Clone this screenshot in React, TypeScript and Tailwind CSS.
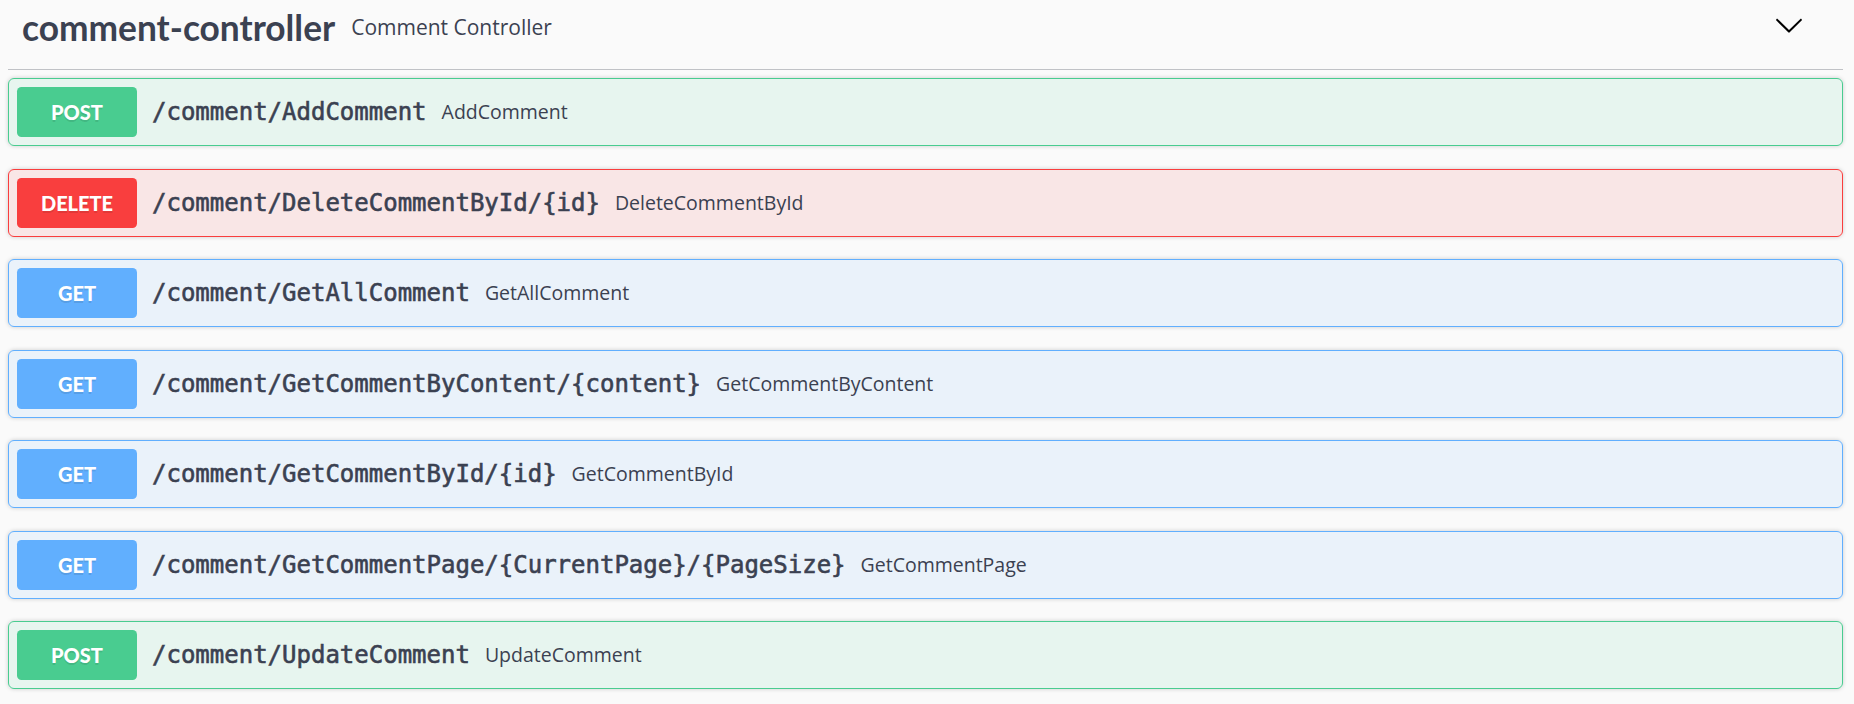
import React from 'react';

type Method = 'GET' | 'POST' | 'DELETE';

interface Operation {
  method: Method;
  path: string;
  summary: string;
}

const operations: Operation[] = [
  { method: 'POST', path: '/comment/AddComment', summary: 'AddComment' },
  { method: 'DELETE', path: '/comment/DeleteCommentById/{id}', summary: 'DeleteCommentById' },
  { method: 'GET', path: '/comment/GetAllComment', summary: 'GetAllComment' },
  { method: 'GET', path: '/comment/GetCommentByContent/{content}', summary: 'GetCommentByContent' },
  { method: 'GET', path: '/comment/GetCommentById/{id}', summary: 'GetCommentById' },
  { method: 'GET', path: '/comment/GetCommentPage/{CurrentPage}/{PageSize}', summary: 'GetCommentPage' },
  { method: 'POST', path: '/comment/UpdateComment', summary: 'UpdateComment' },
];

const styles: Record<Method, { block: string; badge: string }> = {
  POST: { block: 'border-[#49cc90] bg-[#49cc90]/10', badge: 'bg-[#49cc90]' },
  DELETE: { block: 'border-[#f93e3e] bg-[#f93e3e]/10', badge: 'bg-[#f93e3e]' },
  GET: { block: 'border-[#61affe] bg-[#61affe]/10', badge: 'bg-[#61affe]' },
};

function OpBlock({ op }: { op: Operation }) {
  const s = styles[op.method];
  return (
    <div
      className={`flex items-center p-[8px] border rounded-[6px] shadow-[0_0_4px_rgba(0,0,0,0.19)] ${s.block}`}
    >
      {/* method badge */}
      <div
        className={`w-[120px] h-[50px] shrink-0 rounded-[4.5px] flex items-center justify-center text-white font-black text-[20px] [text-shadow:0_1.5px_0_rgba(0,0,0,0.1)] ${s.badge}`}
        style={{ fontFamily: 'Lato, "Open Sans", sans-serif' }}
      >
        {op.method}
      </div>
      <span
        className="px-[15px] text-[24px] text-[#3b4151] whitespace-nowrap [-webkit-text-stroke:0.6px_#3b4151]"
        style={{ fontFamily: '"DejaVu Sans Mono", "Liberation Mono", monospace' }}
      >
        {op.path}
      </span>
      <span
        className="text-[19.5px] text-[#3b4151] whitespace-nowrap"
        style={{ fontFamily: '"Open Sans", sans-serif' }}
      >
        {op.summary}
      </span>
    </div>
  );
}

export default function App() {
  return (
    <div className="min-h-screen bg-[#fafafa] pl-[8px] pr-[11px]">
      {/* tag header */}
      <div className="h-[70px] pb-[14px] pl-[14px] pr-[39px] border-b border-[#3b4151]/30 flex items-center">
        <h4
          className="text-[35.3px] leading-[42px] font-bold text-[#3b4151]"
          style={{ fontFamily: 'Lato, "Open Sans", sans-serif' }}
        >
          comment-controller
        </h4>
        <small
          className="ml-[16px] text-[21px] text-[#3b4151]"
          style={{ fontFamily: '"Open Sans", sans-serif' }}
        >
          Comment Controller
        </small>
        <svg className="ml-auto self-start mt-[10px]" width="30" height="30" viewBox="0 0 20 20" fill="#000">
          <path d="M17.418 6.109c.272-.268.709-.268.979 0s.271.701 0 .969l-7.908 7.83c-.27.268-.707.268-.979 0l-7.908-7.83c-.27-.268-.27-.701 0-.969.271-.268.709-.268.979 0L10 13.25l7.418-7.141z" />
        </svg>
      </div>

      <div className="mt-[8px] flex flex-col gap-[22.5px]">
        {operations.map((op) => (
          <OpBlock key={op.path} op={op} />
        ))}
      </div>
    </div>
  );
}
